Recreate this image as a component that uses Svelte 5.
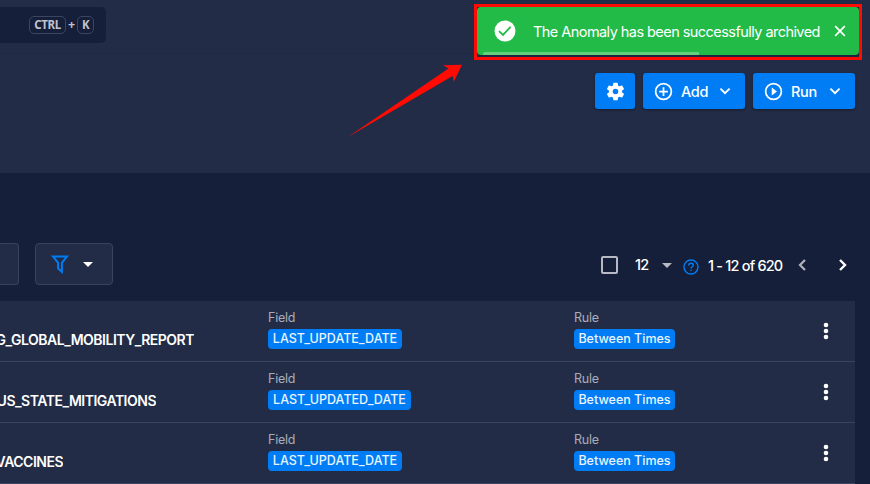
<script>
  const rows = [
    { name: 'G_GLOBAL_MOBILITY_REPORT', end: 194, spacing: -0.5, field: 'LAST_UPDATE_DATE', chip: 134, rule: 'Between Times' },
    { name: 'US_STATE_MITIGATIONS', end: 156, spacing: -0.5, field: 'LAST_UPDATED_DATE', chip: 143, rule: 'Between Times' },
    { name: 'VACCINES', end: 63, spacing: -0.5, field: 'LAST_UPDATE_DATE', chip: 134, rule: 'Between Times' }
  ];
</script>

<div class="page">
  <header class="topbar">
    <div class="search"><kbd>CTRL</kbd><b>+</b><kbd class="k">K</kbd></div>
  </header>

  <section class="hero">
    <button class="gear" aria-label="Settings">
      <svg width="21" height="21" viewBox="0 0 24 24"><path fill="#fff" d="M19.43 12.98c.04-.32.07-.64.07-.98s-.03-.66-.07-.98l2.11-1.65c.19-.15.24-.42.12-.64l-2-3.46c-.12-.22-.39-.3-.61-.22l-2.49 1c-.52-.4-1.08-.73-1.69-.98l-.38-2.65A.49.49 0 0 0 14 2h-4c-.25 0-.46.18-.49.42l-.38 2.65c-.61.25-1.17.59-1.69.98l-2.49-1c-.23-.09-.49 0-.61.22l-2 3.46c-.13.22-.07.49.12.64l2.11 1.65c-.04.32-.07.65-.07.98s.03.66.07.98l-2.11 1.65c-.19.15-.24.42-.12.64l2 3.46c.12.22.39.3.61.22l2.49-1c.52.4 1.08.73 1.69.98l.38 2.65c.03.24.24.42.49.42h4c.25 0 .46-.18.49-.42l.38-2.65c.61-.25 1.17-.59 1.69-.98l2.49 1c.23.09.49 0 .61-.22l2-3.46c.12-.22.07-.49-.12-.64zM12 15.2a3.2 3.2 0 1 1 0-6.4 3.2 3.2 0 0 1 0 6.4z"/></svg>
    </button>
    <button class="action">
      <svg width="21" height="21" viewBox="0 0 24 24"><path fill="#fff" d="M13 7h-2v4H7v2h4v4h2v-4h4v-2h-4zM12 2a10 10 0 1 0 0 20 10 10 0 0 0 0-20zm0 18a8 8 0 1 1 0-16 8 8 0 0 1 0 16z"/></svg>
      <span>Add</span>
      <svg width="20" height="20" viewBox="0 0 24 24"><path fill="none" stroke="#fff" stroke-width="2.300" d="m6.500 9.200 5.500 5.500 5.500-5.500"/></svg>
    </button>
    <button class="action">
      <svg width="21" height="21" viewBox="0 0 24 24"><path fill="#fff" d="m10 16.5 6-4.5-6-4.5zM12 2a10 10 0 1 0 0 20 10 10 0 0 0 0-20zm0 18a8 8 0 1 1 0-16 8 8 0 0 1 0 16z"/></svg>
      <span>Run</span>
      <svg width="20" height="20" viewBox="0 0 24 24"><path fill="none" stroke="#fff" stroke-width="2.300" d="m6.500 9.200 5.500 5.500 5.500-5.500"/></svg>
    </button>
  </section>

  <main>
    <div class="tools">
      <div class="stub"></div>
      <button class="filter" aria-label="Filter">
        <svg width="18" height="20" viewBox="0 0 18 20"><path fill="none" stroke="#007df5" stroke-width="2" d="M2.100 2.600h13.800l-5 6.200v9l-3.800-3.300V8.800z"/></svg>
        <svg class="caret" width="10" height="5" viewBox="0 0 10 5"><path fill="#fff" d="M0 0h10L5 5z"/></svg>
      </button>
      <div class="pager">
        <span class="check"></span>
        <span class="size">12</span>
        <svg class="sizecaret" width="10" height="5" viewBox="0 0 10 5"><path fill="#b7bac2" d="M0 0h10L5 5z"/></svg>
        <svg class="help" width="16" height="16" viewBox="0 0 16 16"><circle cx="8" cy="8" r="7" fill="none" stroke="#007df5" stroke-width="1.4"/><path fill="none" stroke="#007df5" stroke-width="1.4" d="M5.7 6.4C5.7 5 6.7 4.2 8 4.2s2.3.8 2.3 2c0 1.500-2.300 1.600-2.300 3.300"/><path fill="#007df5" d="M7.300 10.700h1.400v1.400H7.300z"/></svg>
        <span class="range">1 - 12 of 620</span>
        <svg class="prev" width="8" height="12" viewBox="0 0 8 12"><path fill="none" stroke="#b0b3bc" stroke-width="2.200" d="M7 1 2 6l5 5"/></svg>
        <svg class="next" width="8" height="12" viewBox="0 0 8 12"><path fill="none" stroke="#fff" stroke-width="2.400" d="m1 1 5 5-5 5"/></svg>
      </div>
    </div>

    <div class="table">
      {#each rows as row}
        <div class="row">
          <div class="namecell"><div class="name" style="width:{row.end}px; letter-spacing:{row.spacing}px">{row.name}</div></div>
          <div class="cell field"><span class="label">Field</span><span class="chip" style="width:{row.chip}px">{row.field}</span></div>
          <div class="cell"><span class="label">Rule</span><span class="chip rule">{row.rule}</span></div>
          <svg class="dots" width="6" height="18" viewBox="0 0 6 18" fill="#fff"><circle cx="3" cy="3" r="2.300"/><circle cx="3" cy="9" r="2.300"/><circle cx="3" cy="15" r="2.300"/></svg>
        </div>
      {/each}
    </div>
  </main>

  <div class="highlight">
    <div class="toast">
      <svg class="ok" width="22" height="22" viewBox="0 0 22 22"><circle cx="11" cy="11" r="10.500" fill="#fff"/><path fill="none" stroke="#23bb48" stroke-width="1.800" d="m5 11.200 4 3.700 7.600-8"/></svg>
      <span class="message">The Anomaly has been successfully archived</span>
      <svg class="close" width="12" height="12" viewBox="0 0 12 12"><path stroke="#fff" stroke-width="1.700" d="m1.200 1.200 9.600 9.600m0-9.600-9.600 9.600"/></svg>
      <i class="progress"></i>
    </div>
  </div>
  <svg class="arrow" width="116" height="75" viewBox="0 0 116 75"><path fill="#ff0b04" d="M.5 74.300 101.500 5.600l-5.400-3.400L115 1.700l-8.200 17-1.200-5.800z"/></svg>
</div>

<style>
  :global(body) { overflow: hidden; background: #161f39; }
  .page { position: relative; width: 870px; height: 484px; overflow: hidden; background: #161f39; color: #fff; font-family: Inter, "Liberation Sans", sans-serif; }
  .page *, .page { box-sizing: border-box; }
  svg { display: block; flex: none; }
  span { white-space: nowrap; }
  button { border: 0; padding: 0; margin: 0; font: inherit; color: inherit; text-align: left; }
  .topbar { height: 53px; background: #232c46; padding-top: 7px; }
  .search { width: 106px; height: 36px; border-radius: 0 5px 5px 0; background: #161f39; display: flex; align-items: center; padding-left: 29px; color: #bfc3ce; }
  kbd { width: 37px; height: 18px; border: 1px solid #3b4560; border-radius: 5px; font: bold 11.500px/16px "Noto Sans", sans-serif; text-align: center; letter-spacing: -.4px; }
  kbd.k { width: 17px; }
  b { width: 11px; text-align: center; font: bold 12.500px/16px "Noto Sans", sans-serif; }
  .hero { height: 120px; background: #232c46; border-top: 1px solid #202941; display: flex; justify-content: flex-end; gap: 8px; padding: 19px 15px 0 0; }
  .gear, .action { height: 36px; border-radius: 3px; background: #007df5; display: flex; align-items: center; box-shadow: 0 1px 3px #0005; }
  .gear { width: 40px; justify-content: center; }
  .action { width: 102px; padding: 0 10px; font-size: 14.500px; font-weight: 500; letter-spacing: -.3px; }
  .action span { margin-left: 7px; flex: 1; }
  .tools { height: 128px; display: flex; align-items: flex-start; padding-top: 70px; }
  .stub { width: 19px; height: 42px; background: #232c46; border: 1px solid #3a435b; border-left: 0; border-radius: 0 4px 4px 0; }
  .filter { margin-left: 16px; width: 78px; height: 42px; background: #232c46; border: 1px solid #3a435b; border-radius: 4px; display: flex; align-items: center; padding-left: 15px; }
  .caret { margin-left: 14px; }
  .pager { display: flex; align-items: center; height: 44px; margin-left: 488px; font-size: 14.500px; font-weight: 500; }
  .check { width: 17px; height: 18px; border: 2px solid #b7bac2; border-radius: 2px; }
  .size { width: 16px; margin: 0 0 1px 17px; letter-spacing: -.8px; }
  .sizecaret { margin: 1px 0 0 11px; }
  .help { margin: 4px 0 0 11px; }
  .range { width: 76px; margin: 1px 0 0 9px; letter-spacing: -.8px; }
  .prev { margin-left: 14px; }
  .next { margin-left: 33px; }
  .table { width: 855px; background: #232c46; }
  .row { height: 61px; border-bottom: 1px solid #3a435f; display: flex; }
  .namecell { width: 268px; padding-top: 30px; }
  .name { height: 18px; display: flex; justify-content: flex-end; overflow: hidden; font-size: 14px; line-height: 18px; font-weight: 600; }
  .cell { display: flex; flex-direction: column; align-items: flex-start; padding-top: 8px; }
  .field { width: 306px; }
  .label { height: 16px; font-size: 12.500px; line-height: 17px; color: #a9adb8; letter-spacing: -.25px; }
  .chip { height: 20px; margin-top: 4px; border-radius: 4px; background: #007df5; color: #eaf4ff; font-size: 12.500px; line-height: 20px; font-weight: 500; text-align: center; }
  .rule { width: 101px; }
  .dots { margin: 21px 26px 0 auto; }
  .highlight { position: absolute; left: 474px; top: 4px; width: 388px; height: 56px; border: 3px solid #ff0b04; background: #1d263d; }
  .toast { position: relative; height: 48px; border-radius: 4px; background: #23bb48; display: flex; align-items: center; padding-left: 17px; }
  .message { width: 288px; margin-left: 17px; font-size: 14.500px; letter-spacing: -.55px; padding-top: 1px; }
  .close { margin: 0 0 1px 13px; }
  .progress { position: absolute; left: 6px; bottom: 0; width: 216px; height: 3px; background: #65cf7f; border-radius: 2px 0 0 0; }
  .arrow { position: absolute; left: 347px; top: 63px; }
</style>
